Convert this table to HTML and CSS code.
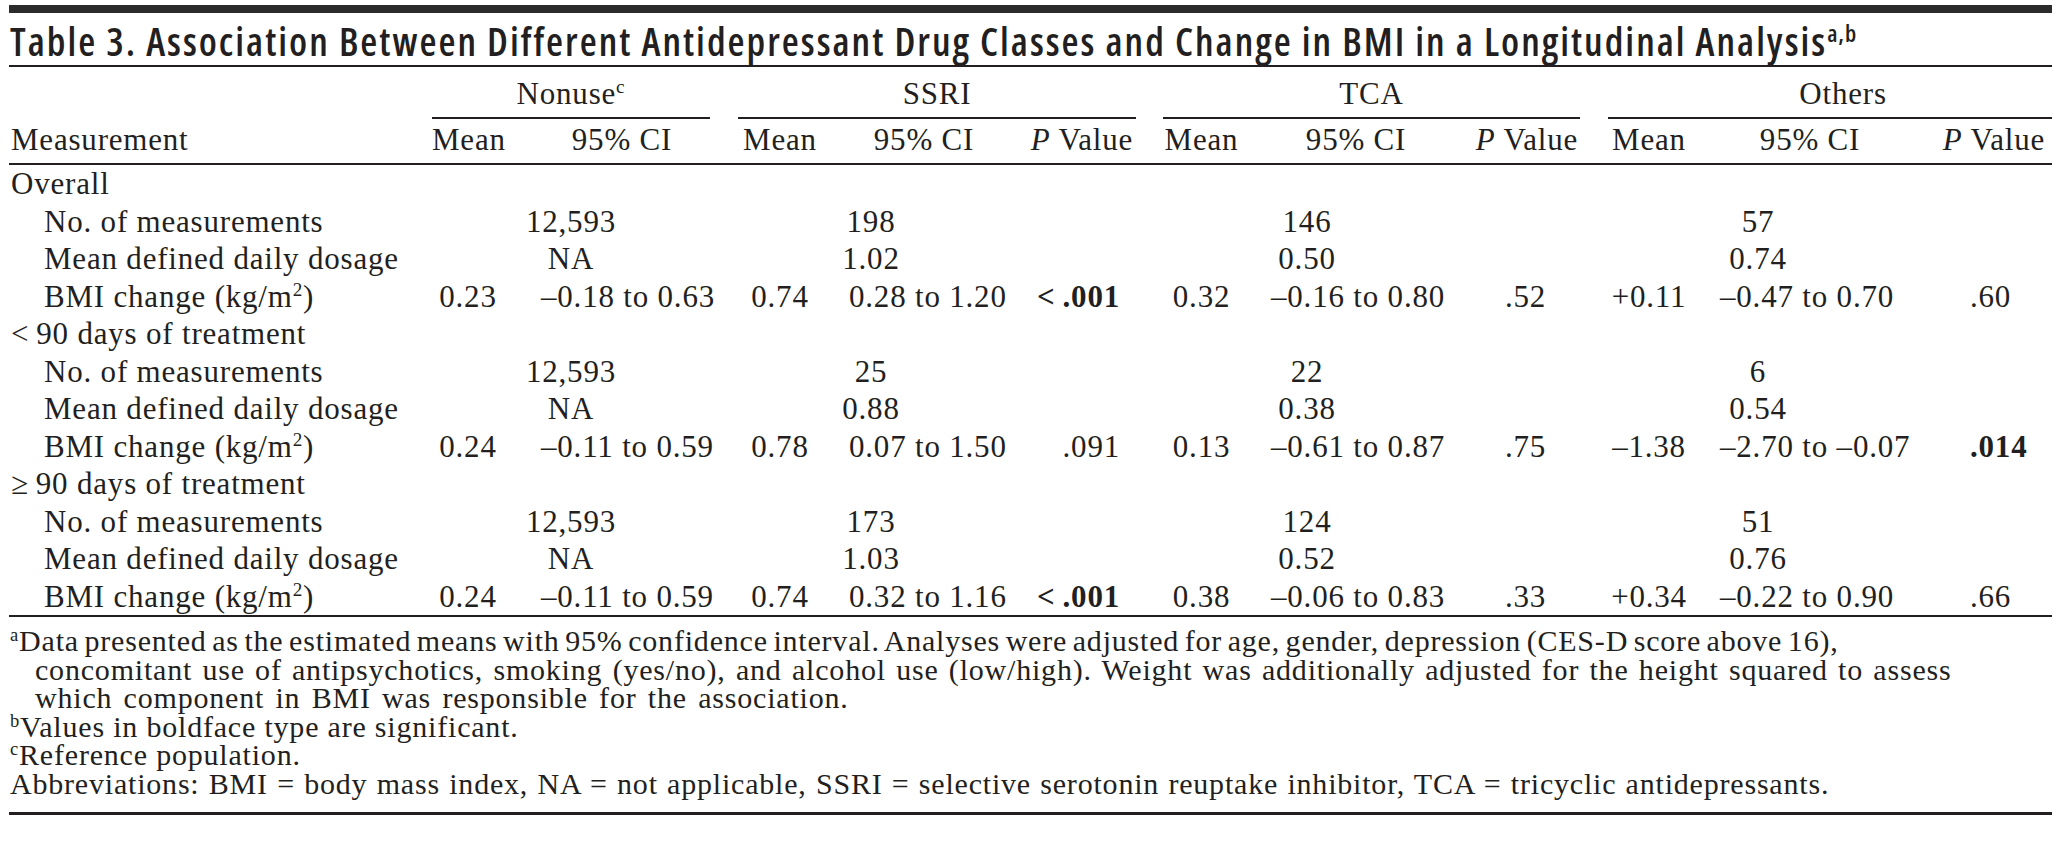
FILE: index.html
```html
<!DOCTYPE html>
<html lang="en">
<head>
<meta charset="utf-8">
<title>Table 3</title>
<link rel="stylesheet" href="styles.css">
</head>
<body>
<div class="page">
  <div class="topbar"></div>
  <h1 class="title">Table 3. Association Between Different Antidepressant Drug Classes and Change in BMI in a Longitudinal Analysis<sup>a,b</sup></h1>
  <table class="data">
    <colgroup>
      <col class="w-meas">
      <col class="w-n-mean"><col class="w-n-ci">
      <col class="w-gap1">
      <col class="w-s-mean"><col class="w-s-ci"><col class="w-s-p">
      <col class="w-gap2">
      <col class="w-t-mean"><col class="w-t-ci"><col class="w-t-p">
      <col class="w-gap3">
      <col class="w-o-mean"><col class="w-o-ci"><col class="w-o-p">
    </colgroup>
    <thead>
      <tr class="grp">
        <th></th>
        <th colspan="2" class="g">Nonuse<sup>c</sup></th>
        <th></th>
        <th colspan="3" class="g">SSRI</th>
        <th></th>
        <th colspan="3" class="g">TCA</th>
        <th></th>
        <th colspan="3" class="g g-o">Others</th>
      </tr>
      <tr class="hdr">
        <th class="meas">Measurement</th>
        <th class="mean">Mean</th>
        <th class="hci-n">95% CI</th>
        <th></th>
        <th class="mean">Mean</th>
        <th>95% CI</th>
        <th class="hp"><i>P</i> Value</th>
        <th></th>
        <th class="mean">Mean</th>
        <th>95% CI</th>
        <th class="hp hp-t"><i>P</i> Value</th>
        <th></th>
        <th class="mean">Mean</th>
        <th>95% CI</th>
        <th class="hp hp-o"><i>P</i> Value</th>
      </tr>
    </thead>
    <tbody>
      <tr>
        <td class="meas">Overall</td>
        <td colspan="14"></td>
      </tr>
      <tr>
        <td class="meas ind">No. of measurements</td>
        <td colspan="2" class="span">12,593</td><td></td>
        <td colspan="2" class="span sp-s">198</td><td></td><td></td>
        <td colspan="2" class="span sp-t">146</td><td></td><td></td>
        <td colspan="2" class="span sp-o">57</td><td></td>
      </tr>
      <tr>
        <td class="meas ind">Mean defined daily dosage</td>
        <td colspan="2" class="span">NA</td><td></td>
        <td colspan="2" class="span sp-s">1.02</td><td></td><td></td>
        <td colspan="2" class="span sp-t">0.50</td><td></td><td></td>
        <td colspan="2" class="span sp-o">0.74</td><td></td>
      </tr>
      <tr>
        <td class="meas ind">BMI change (kg/m<sup>2</sup>)</td>
        <td class="mean">0.23</td><td class="ci-n">–0.18 to 0.63</td><td></td>
        <td class="mean">0.74</td><td class="ci-s">0.28 to 1.20</td><td class="p-s"><b>&lt;&#8201;.001</b></td><td></td>
        <td class="mean">0.32</td><td class="ci-t">–0.16 to 0.80</td><td class="p-t">.52</td><td></td>
        <td class="mean">+0.11</td><td class="ci-o">–0.47 to 0.70</td><td class="p-o">.60</td>
      </tr>
      <tr>
        <td class="meas">&lt;&#8201;90 days of treatment</td>
        <td colspan="14"></td>
      </tr>
      <tr>
        <td class="meas ind">No. of measurements</td>
        <td colspan="2" class="span">12,593</td><td></td>
        <td colspan="2" class="span sp-s">25</td><td></td><td></td>
        <td colspan="2" class="span sp-t">22</td><td></td><td></td>
        <td colspan="2" class="span sp-o">6</td><td></td>
      </tr>
      <tr>
        <td class="meas ind">Mean defined daily dosage</td>
        <td colspan="2" class="span">NA</td><td></td>
        <td colspan="2" class="span sp-s">0.88</td><td></td><td></td>
        <td colspan="2" class="span sp-t">0.38</td><td></td><td></td>
        <td colspan="2" class="span sp-o">0.54</td><td></td>
      </tr>
      <tr>
        <td class="meas ind">BMI change (kg/m<sup>2</sup>)</td>
        <td class="mean">0.24</td><td class="ci-n">–0.11 to 0.59</td><td></td>
        <td class="mean">0.78</td><td class="ci-s">0.07 to 1.50</td><td class="p-s">.091</td><td></td>
        <td class="mean">0.13</td><td class="ci-t">–0.61 to 0.87</td><td class="p-t">.75</td><td></td>
        <td class="mean">–1.38</td><td class="ci-o">–2.70 to –0.07</td><td class="p-o"><b>.014</b></td>
      </tr>
      <tr>
        <td class="meas">≥&#8201;90 days of treatment</td>
        <td colspan="14"></td>
      </tr>
      <tr>
        <td class="meas ind">No. of measurements</td>
        <td colspan="2" class="span">12,593</td><td></td>
        <td colspan="2" class="span sp-s">173</td><td></td><td></td>
        <td colspan="2" class="span sp-t">124</td><td></td><td></td>
        <td colspan="2" class="span sp-o">51</td><td></td>
      </tr>
      <tr>
        <td class="meas ind">Mean defined daily dosage</td>
        <td colspan="2" class="span">NA</td><td></td>
        <td colspan="2" class="span sp-s">1.03</td><td></td><td></td>
        <td colspan="2" class="span sp-t">0.52</td><td></td><td></td>
        <td colspan="2" class="span sp-o">0.76</td><td></td>
      </tr>
      <tr>
        <td class="meas ind">BMI change (kg/m<sup>2</sup>)</td>
        <td class="mean">0.24</td><td class="ci-n">–0.11 to 0.59</td><td></td>
        <td class="mean">0.74</td><td class="ci-s">0.32 to 1.16</td><td class="p-s"><b>&lt;&#8201;.001</b></td><td></td>
        <td class="mean">0.38</td><td class="ci-t">–0.06 to 0.83</td><td class="p-t">.33</td><td></td>
        <td class="mean">+0.34</td><td class="ci-o">–0.22 to 0.90</td><td class="p-o">.66</td>
      </tr>
    </tbody>
  </table>
  <div class="notes">
    <p class="hang"><span class="l1"><sup>a</sup>Data presented as the estimated means with 95% confidence interval. Analyses were adjusted for age, gender, depression (CES-D score above 16),</span><br><span class="l2">concomitant use of antipsychotics, smoking (yes/no), and alcohol use (low/high). Weight was additionally adjusted for the height squared to assess</span><br><span class="l3">which component in BMI was responsible for the association.</span></p>
    <p><sup>b</sup>Values in boldface type are significant.</p>
    <p><sup>c</sup>Reference population.</p>
    <p class="abbr">Abbreviations: BMI = body mass index, NA = not applicable, SSRI = selective serotonin reuptake inhibitor, TCA = tricyclic antidepressants.</p>
  </div>
</div>
</body>
</html>
```

FILE: styles.css
```css
html, body {
  margin: 0;
  padding: 0;
  background: #ffffff;
}

body {
  font-family: "Liberation Serif", "Times New Roman", serif;
  color: #231f20;
}

.page {
  width: 2043px;
  padding: 5px 9px 0 9px;
}

.topbar {
  height: 8px;
  background: #2b2b2b;
}

.title {
  margin: 0;
  padding: 3px 0 0 1px;
  height: 49px;
  font-family: "Open Sans", "Liberation Sans", sans-serif;
  font-weight: 600;
  font-stretch: 75%;
  font-size: 39px;
  letter-spacing: 2px;
  line-height: 49px;
  white-space: nowrap;
  color: #231f20;
  border-bottom: 2px solid #231f20;
}

.title sup {
  font-size: 0.6em;
  vertical-align: 0.62em;
  line-height: 0;
  font-weight: 600;
  letter-spacing: 1px;
}

sup {
  font-size: 0.62em;
  vertical-align: 0.55em;
  line-height: 0;
}

.data {
  border-collapse: separate;
  border-spacing: 0;
  table-layout: fixed;
  width: 2043px;
  font-size: 31px;
  letter-spacing: 0.8px;
}

.w-meas { width: 423px; }
.w-n-mean { width: 72px; }
.w-n-ci { width: 206px; }
.w-gap1 { width: 28px; }
.w-s-mean { width: 84px; }
.w-s-ci { width: 204px; }
.w-s-p { width: 110px; }
.w-gap2 { width: 27px; }
.w-t-mean { width: 77px; }
.w-t-ci { width: 232px; }
.w-t-p { width: 108px; }
.w-gap3 { width: 28px; }
.w-o-mean { width: 82px; }
.w-o-ci { width: 240px; }
.w-o-p { width: 122px; }

.data th,
.data td {
  padding: 0;
  white-space: nowrap;
  font-weight: normal;
  overflow: visible;
}

.grp th {
  padding: 10px 0 6px 0;
  line-height: 34px;
  text-align: center;
}

.grp .g {
  border-bottom: 2px solid #231f20;
}

.grp .g-o {
  padding-left: 26px;
}

.hdr th {
  padding: 4px 0 6px 0;
  line-height: 34px;
  text-align: center;
  border-bottom: 2px solid #231f20;
}

.hdr .meas {
  text-align: left;
  padding-left: 2px;
}

.hdr .hci-n {
  padding-left: 30px;
}

.hdr .hp {
  text-align: right;
  padding-right: 3px;
}

.hdr .hp-t {
  padding-right: 2px;
}

.hdr .hp-o {
  padding-right: 7px;
}

tbody td {
  line-height: 37.5px;
  height: 37.5px;
  text-align: left;
}

tbody tr:last-child td {
  border-bottom: 2px solid #231f20;
}

td.meas {
  padding-left: 2px;
}

td.meas.ind {
  padding-left: 35px;
}

td.mean {
  text-align: center;
}

td.span {
  text-align: center;
}

td.sp-s { padding-right: 22px; }
td.sp-t { padding-right: 21px; }
td.sp-o { padding-right: 22px; }

td.ci-n { padding-left: 37px; }
td.ci-s { padding-left: 27px; }
td.ci-t { padding-left: 31px; }
td.ci-o { padding-left: 30px; }

td.p-s {
  text-align: right;
  padding-right: 16px;
}

td.p-t { padding-left: 33px; }
td.p-o { padding-left: 40px; }

.notes {
  padding: 10px 0 13px 1px;
  font-size: 30px;
  line-height: 28.6px;
  letter-spacing: 0.8px;
  border-bottom: 3px solid #231f20;
}

.notes p {
  margin: 0;
  white-space: nowrap;
}

.notes .hang {
  padding-left: 25px;
  text-indent: -25px;
}

.notes .l1 {
  word-spacing: -2.7px;
}

.notes .l2 {
  word-spacing: 2px;
}

.notes .l3 {
  word-spacing: 3px;
}

.notes .abbr {
  word-spacing: 1px;
}
```
